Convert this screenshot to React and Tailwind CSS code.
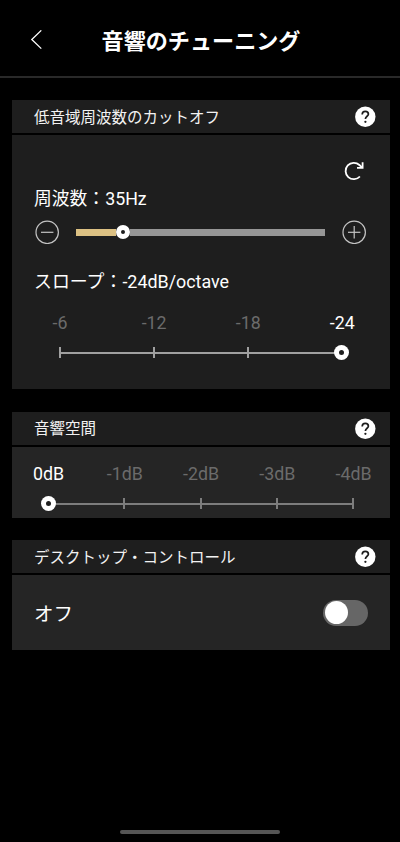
import { useState } from "react";

const HelpIcon = () => (
  <svg width="21" height="21" viewBox="0 0 21 21" fill="none">
    <circle cx="10.3" cy="10.7" r="10.2" fill="#fff" />
    <path
      d="M7.2 8.4C7.2 6.5 8.5 5.4 10.3 5.4S13.4 6.5 13.4 8.2C13.4 10.2 10.4 10.4 10.4 13"
      stroke="#1c1c1c"
      strokeWidth="1.7"
    />
    <circle cx="10.4" cy="15.8" r="1.15" fill="#1c1c1c" />
  </svg>
);

const ReloadIcon = () => (
  <svg width="20" height="20" viewBox="0 0 20 20" fill="none" stroke="#fff" strokeWidth="1.8">
    <path d="M15.9 15.5A8.2 8.2 0 1 1 15.4 4L18 6.4" />
    <path d="M18.6 1.3V6.8H13" />
  </svg>
);

const StepIcon = ({ plus }) => (
  <svg width="24" height="24" viewBox="0 0 24 24" fill="none" stroke="#c4c4c4" strokeWidth="1.2">
    <circle cx="12.2" cy="12.3" r="11.2" />
    <path d="M6 12.3H18.4" />
    {plus && <path d="M12.2 6.1V18.5" />}
  </svg>
);

const Section = ({ title, className, children }) => (
  <section className="mb-[22.5px] flex flex-col gap-[2px]">
    <div className="flex h-[33px] items-center justify-between bg-[#1e1e1e] pl-[22px] pr-[14px]">
      <h2 className="pt-[4px] text-[15.5px] leading-none text-[#f2f2f2]">{title}</h2>
      <button type="button">
        <HelpIcon />
      </button>
    </div>
    <div className={className}>{children}</div>
  </section>
);

const StepSlider = ({ steps, value, onChange, line }) => (
  <div className="flex justify-between">
    {steps.map((step, i) => (
      <button
        key={step}
        type="button"
        onClick={() => onChange(i)}
        className="relative flex w-[2px] flex-col items-center"
      >
        <span
          className={`h-5 pl-px text-[17.8px] leading-5 whitespace-nowrap ${
            i === value ? "text-white" : "text-[#6b6b6b]"
          }`}
        >
          {step}
        </span>
        <span className="mt-[12px] flex h-[15px] items-center">
          {i === value ? (
            <span className="flex size-[15px] shrink-0 items-center justify-center rounded-full bg-white">
              <span className="size-[5px] rounded-full bg-[#1e1e1e]" />
            </span>
          ) : (
            <span className={`h-[11px] w-[2px] ${line}`} />
          )}
        </span>
      </button>
    ))}
  </div>
);

const App = () => {
  const [slope, setSlope] = useState(3);
  const [space, setSpace] = useState(0);
  const [desktop, setDesktop] = useState(false);
  const [frequency, setFrequency] = useState(35);

  return (
    <div className="flex h-[842px] w-[400px] flex-col overflow-hidden bg-black font-[Roboto,'Noto_Sans_CJK_JP',sans-serif] text-white">
      <header className="flex h-[78px] shrink-0 items-center border-b-2 border-[#292929] pt-[3px]">
        <button type="button" className="w-[60px] pl-[30px]">
          <svg width="13" height="20" viewBox="0 0 13 20" fill="none" stroke="#fff" strokeWidth="1.3">
            <path d="M11.3 .4L1.8 9.5L11.3 18.6" />
          </svg>
        </button>
        <h1 className="flex-1 pl-[2px] pt-[4px] text-center text-[22.1px] font-bold leading-none">
          音響のチューニング
        </h1>
        <div className="w-[60px]" />
      </header>

      <main className="flex-1 pl-3 pr-[10px] pt-[22px]">
        <Section title="低音域周波数のカットオフ" className="h-[254px] bg-[#1e1e1e] pt-[26px]">
          <div className="flex justify-end pr-[26px]">
            <button type="button" onClick={() => setFrequency(35)}>
              <ReloadIcon />
            </button>
          </div>
          <p className="mt-[8px] pl-[22px] text-[17.8px] leading-5">周波数：{frequency}Hz</p>
          <div className="mt-[11px] flex items-center pl-[23px] pr-[24px]">
            <button type="button" onClick={() => setFrequency(frequency - 5)}>
              <StepIcon />
            </button>
            <div className="ml-[17px] mr-[17px] flex flex-1 items-center">
              <div className="h-[7px] bg-[#dcc183]" style={{ width: `${(frequency * 40) / 35}px` }} />
              <div className="flex size-[14px] shrink-0 items-center justify-center rounded-full bg-white">
                <div className="size-[4px] rounded-full bg-[#1e1e1e]" />
              </div>
              <div className="h-[7px] flex-1 bg-[#969696]" />
            </div>
            <button type="button" onClick={() => setFrequency(frequency + 5)}>
              <StepIcon plus />
            </button>
          </div>
          <p className="mt-[28px] pl-[22px] text-[17.9px] leading-5">スロープ：-24dB/octave</p>
          <div className="relative mt-[21px] pl-[46.5px] pr-[47.2px]">
            <div className="absolute left-[47px] right-[47px] top-[39px] h-[2px] bg-[#a0a0a0]" />
            <StepSlider
              steps={["-6", "-12", "-18", "-24"]}
              value={slope}
              onChange={setSlope}
              line="bg-[#a0a0a0]"
            />
          </div>
        </Section>

        <Section title="音響空間" className="h-[71px] bg-[#252525] pt-[17px]">
          <div className="relative pl-[35px] pr-[36px]">
            <div className="absolute left-[36px] right-[36px] top-[39px] h-[2px] bg-[#7d7d7d]" />
            <StepSlider
              steps={["0dB", "-1dB", "-2dB", "-3dB", "-4dB"]}
              value={space}
              onChange={setSpace}
              line="bg-[#7d7d7d]"
            />
          </div>
        </Section>

        <Section
          title="デスクトップ・コントロール"
          className="flex h-[75px] items-center justify-between bg-[#252525] pl-[22px] pr-[22px]"
        >
          <span className="pt-[5px] text-[19.5px] leading-none">{desktop ? "オン" : "オフ"}</span>
          <button
            type="button"
            onClick={() => setDesktop(!desktop)}
            className={`flex h-[26px] w-[45px] items-center rounded-full bg-[#666] px-[2px] ${
              desktop ? "justify-end" : "justify-start"
            }`}
          >
            <span className="size-[23px] rounded-full bg-white" />
          </button>
        </Section>
      </main>

      <div className="mx-auto mb-2 h-[4px] w-[160px] rounded-full bg-[#555]" />
    </div>
  );
};

export default App;
